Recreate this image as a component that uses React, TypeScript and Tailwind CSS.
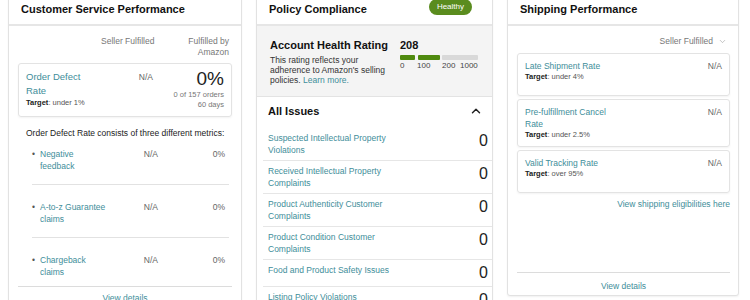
import { ChevronDown, ChevronUp } from "lucide-react";

const link = "text-[#418e9a]";

function Card({
  title,
  badge,
  className,
  children,
}: {
  title: string;
  badge?: string;
  className?: string;
  children: React.ReactNode;
}) {
  return (
    <div
      className={`flex flex-col bg-white border border-[#e2e2e2] rounded-[3px] shadow-[0_1px_2px_rgba(0,0,0,0.06)] ${className ?? ""}`}
    >
      <div className="flex items-center justify-between pl-[12px] pr-[12px] pt-[11px] pb-[8px] border-b-2 border-[#e6e6e6]">
        <h2 className="text-[11px] leading-[14px] font-bold text-[#111]">{title}</h2>
        {badge && (
          <span className="mr-[8px] -mt-[4px] h-[16px] px-[8px] flex items-center rounded-full bg-[#5a8c1e] text-white text-[8px]">
            {badge}
          </span>
        )}
      </div>
      {children}
    </div>
  );
}

function Target({ value }: { value: string }) {
  return (
    <div className="text-[7.5px] leading-[10px] text-[#555]">
      <span className="font-bold text-[#222]">Target</span>: {value}
    </div>
  );
}

const metrics = ["Negative feedback", "A-to-z Guarantee claims", "Chargeback claims"];

const issues = [
  "Suspected Intellectual Property Violations",
  "Received Intellectual Property Complaints",
  "Product Authenticity Customer Complaints",
  "Product Condition Customer Complaints",
  "Food and Product Safety Issues",
  "Listing Policy Violations",
];

const shipping = [
  { label: "Late Shipment Rate", target: "under 4%" },
  { label: "Pre-fulfillment Cancel Rate", target: "under 2.5%" },
  { label: "Valid Tracking Rate", target: "over 95%" },
];

export default function App() {
  return (
    <div className="w-[750px] h-[300px] overflow-hidden bg-white text-[#222] font-['Liberation_Sans',Arial,sans-serif]">
      <div className="flex items-start gap-[14px] pl-[8px] -mt-[10px]">
        {/* Customer service */}
        <Card title="Customer Service Performance" className="w-[234px] h-[330px]">
          <div className="pl-[9px] pr-[9px]">
            <div className="flex pt-[10px] pr-[3px] text-[8.5px] leading-[11px] text-[#777]">
              <div className="w-[83px]" />
              <div className="w-[52px] text-right whitespace-nowrap">Seller Fulfilled</div>
              <div className="flex-1 text-right">
                Fulfilled by
                <br />
                Amazon
              </div>
            </div>

            <div className="mt-[5px] flex border border-[#e3e3e3] rounded-[3px] shadow-[0_1px_2px_rgba(0,0,0,0.05)] pl-[7px] pr-[7px] pt-[6px] pb-[6px]">
              <div className="w-[75px]">
                <div className={`w-[70px] text-[9.5px] leading-[14px] ${link}`}>Order Defect Rate</div>
                <Target value="under 1%" />
              </div>
              <div className="w-[52px] text-right text-[8.5px] leading-[14px] text-[#666]">N/A</div>
              <div className="flex-1 text-right">
                <div className="-mt-[2px] text-[19px] leading-[22px] text-[#222]">0%</div>
                <div className="text-[7.5px] leading-[10px] text-[#777]">0 of 157 orders</div>
                <div className="text-[7.5px] leading-[10px] text-[#777]">60 days</div>
              </div>
            </div>

            <p className="mt-[11px] pl-[8px] text-[8.5px] leading-[11px]">
              Order Defect Rate consists of three different metrics:
            </p>

            <ul className="ml-[14px] mr-[3px]">
              {metrics.map((m, i) => (
                <li
                  key={m}
                  className={`flex text-[8.5px] leading-[11.5px] ${i === 0 ? "pt-[10px]" : "pt-[17px]"} ${
                    i < metrics.length - 1 ? "pb-[12px] border-b border-[#e2e2e2]" : "pb-[8px]"
                  }`}
                >
                  <span className="w-[8px] text-[#555]">•</span>
                  <span className={`w-[68px] ${link}`}>{m}</span>
                  <span className="w-[50px] text-right text-[#666]">N/A</span>
                  <span className="flex-1 text-right pr-[4px] text-[#666]">0%</span>
                </li>
              ))}
            </ul>

            <div className={`border-t border-[#dcdcdc] pt-[6px] text-center text-[8.5px] leading-[11px] ${link}`}>
              View details
            </div>
          </div>
        </Card>

        {/* Policy compliance */}
        <Card title="Policy Compliance" badge="Healthy" className="w-[237px] h-[330px]">
          <div className="flex bg-[#f4f4f4] border-b border-[#e3e3e3] pl-[13px] pt-[12px] pb-[11px]">
            <div className="w-[130px]">
              <div className="text-[11px] leading-[14px] font-bold text-[#111]">Account Health Rating</div>
              <p className="mt-[3px] w-[120px] text-[8.5px] leading-[10px] text-[#333]">
                This rating reflects your adherence to Amazon's selling policies.{" "}
                <span className={link}>Learn more.</span>
              </p>
            </div>
            <div>
              <div className="text-[11px] leading-[14px] font-bold text-[#111]">208</div>
              <div className="mt-[3px] flex h-[5px]">
                <div className="w-[15px] rounded-[1px] bg-[#4f8a0f]" />
                <div className="ml-[3px] w-[22px] rounded-[1px] bg-[#4f8a0f]" />
                <div className="ml-[2px] w-[36px] rounded-[1px] bg-[#d9d9d9]" />
              </div>
              <div className="mt-[1px] flex text-[8px] leading-[9px] text-[#444]">
                <span className="w-[17px]">0</span>
                <span className="w-[25px]">100</span>
                <span className="w-[18px]">200</span>
                <span>1000</span>
              </div>
            </div>
          </div>

          <div className="flex items-center justify-between pl-[11px] pr-[9px] pt-[7px] pb-[10px]">
            <span className="text-[11px] leading-[14px] font-bold text-[#111]">All Issues</span>
            <ChevronUp size={14} strokeWidth={2.5} className="text-[#222]" />
          </div>

          <ul className="ml-[6px]">
            {issues.map((s) => (
              <li
                key={s}
                className="flex items-start justify-between border-b border-[#e6e6e6] pl-[5px] pr-[4px] pt-[4px] pb-[4px]"
              >
                <span className={`w-[140px] text-[8.5px] leading-[12px] ${link}`}>{s}</span>
                <span className="text-[16px] leading-[18px] text-[#222]">0</span>
              </li>
            ))}
          </ul>
        </Card>

        {/* Shipping */}
        <Card title="Shipping Performance" className="w-[232px] h-[306px]">
          <div className="flex flex-1 flex-col pl-[9px] pr-[8px]">
            <div className="flex items-center justify-end gap-[5px] pt-[10px] pr-[3px] text-[8.5px] leading-[11px] text-[#777]">
              Seller Fulfilled
              <ChevronDown size={9} strokeWidth={1.5} className="text-[#999]" />
            </div>

            <div className="mt-[6px] flex flex-col gap-[3px]">
              {shipping.map((m) => (
                <div
                  key={m.label}
                  className="min-h-[43px] flex justify-between border border-[#e3e3e3] rounded-[3px] shadow-[0_1px_2px_rgba(0,0,0,0.05)] pl-[7px] pr-[7px] pt-[6px] pb-[6px]"
                >
                  <div>
                    <div className={`w-[90px] text-[8.5px] leading-[12px] ${link}`}>{m.label}</div>
                    <Target value={m.target} />
                  </div>
                  <span className="text-[8.5px] leading-[12px] text-[#666]">N/A</span>
                </div>
              ))}
            </div>

            <div className={`mt-[6px] text-right text-[8.5px] leading-[11px] ${link}`}>
              View shipping eligibilities here
            </div>

            <div className={`mt-auto border-t border-[#dcdcdc] pt-[8px] pb-[3px] text-center text-[8.5px] leading-[11px] ${link}`}>
              View details
            </div>
          </div>
        </Card>
      </div>
    </div>
  );
}
